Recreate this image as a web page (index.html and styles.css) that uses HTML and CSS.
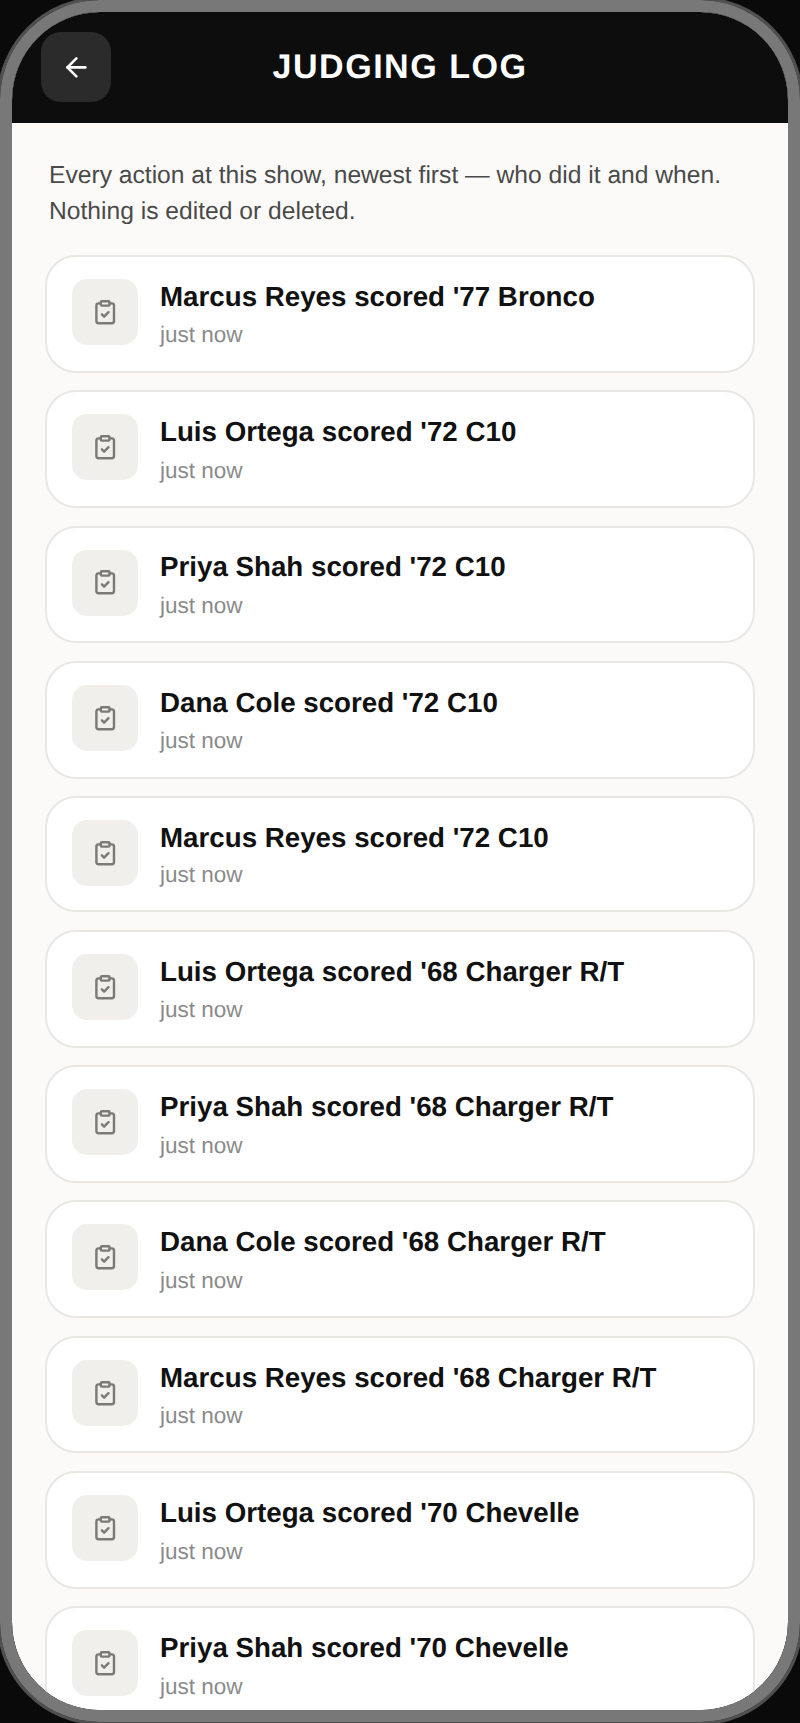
FILE: index.html
```html
<!DOCTYPE html>
<html lang="en">
<head>
<meta charset="utf-8">
<title>Judging Log</title>
<link rel="stylesheet" href="styles.css">
</head>
<body>
<svg class="defs" width="0" height="0" aria-hidden="true">
  <symbol id="clip" viewBox="0 0 24 24"><rect x="8" y="2" width="8" height="4" rx="1"/><path d="M16 4h2a2 2 0 0 1 2 2v14a2 2 0 0 1-2 2H6a2 2 0 0 1-2-2V6a2 2 0 0 1 2-2h2"/><path d="m9 14 2 2 4-4"/></symbol>
</svg>
<div class="phone">
  <div class="screen">
    <header class="topbar">
      <button class="back" aria-label="Back">
        <svg class="back-icon" viewBox="0 0 24 24"><path d="m12 19-7-7 7-7"/><path d="M19 12H5"/></svg>
      </button>
      <h1 class="title">JUDGING LOG</h1>
    </header>
    <main class="content">
      <p class="intro">Every action at this show, newest first — who did it and when. Nothing is edited or deleted.</p>
      <ul class="log">
        <li class="card"><span class="badge"><svg class="badge-icon"><use href="#clip"/></svg></span><div class="text"><div class="who">Marcus Reyes scored '77 Bronco</div><div class="when">just now</div></div></li>
        <li class="card"><span class="badge"><svg class="badge-icon"><use href="#clip"/></svg></span><div class="text"><div class="who">Luis Ortega scored '72 C10</div><div class="when">just now</div></div></li>
        <li class="card"><span class="badge"><svg class="badge-icon"><use href="#clip"/></svg></span><div class="text"><div class="who">Priya Shah scored '72 C10</div><div class="when">just now</div></div></li>
        <li class="card"><span class="badge"><svg class="badge-icon"><use href="#clip"/></svg></span><div class="text"><div class="who">Dana Cole scored '72 C10</div><div class="when">just now</div></div></li>
        <li class="card card-tight"><span class="badge"><svg class="badge-icon"><use href="#clip"/></svg></span><div class="text"><div class="who">Marcus Reyes scored '72 C10</div><div class="when">just now</div></div></li>
        <li class="card"><span class="badge"><svg class="badge-icon"><use href="#clip"/></svg></span><div class="text"><div class="who">Luis Ortega scored '68 Charger R/T</div><div class="when">just now</div></div></li>
        <li class="card"><span class="badge"><svg class="badge-icon"><use href="#clip"/></svg></span><div class="text"><div class="who">Priya Shah scored '68 Charger R/T</div><div class="when">just now</div></div></li>
        <li class="card"><span class="badge"><svg class="badge-icon"><use href="#clip"/></svg></span><div class="text"><div class="who">Dana Cole scored '68 Charger R/T</div><div class="when">just now</div></div></li>
        <li class="card"><span class="badge"><svg class="badge-icon"><use href="#clip"/></svg></span><div class="text"><div class="who">Marcus Reyes scored '68 Charger R/T</div><div class="when">just now</div></div></li>
        <li class="card"><span class="badge"><svg class="badge-icon"><use href="#clip"/></svg></span><div class="text"><div class="who">Luis Ortega scored '70 Chevelle</div><div class="when">just now</div></div></li>
        <li class="card"><span class="badge"><svg class="badge-icon"><use href="#clip"/></svg></span><div class="text"><div class="who">Priya Shah scored '70 Chevelle</div><div class="when">just now</div></div></li>
      </ul>
    </main>
  </div>
</div>
</body>
</html>
```
FILE: styles.css
```css
* { box-sizing: border-box; }
html, body { margin: 0; height: 100%; background: #0a0a0a; overflow: hidden; }
body { font-family: "Liberation Sans", Arial, sans-serif; text-rendering: geometricPrecision; }
.defs { position: absolute; }
.phone {
  height: 1722px;
  border: 12px solid #787878;
  border-radius: 100px;
  box-shadow: 0 0 0 3px #505050;
  overflow: hidden;
}
.screen {
  height: 100%;
  background: #fbfaf8;
  border-radius: 88px;
  overflow: hidden;
}
.topbar {
  height: 111px;
  background: #0d0d0d;
  padding: 20px 29px 0;
  display: grid;
  grid-template-columns: 1fr auto 1fr;
  align-items: start;
}
.back {
  width: 70px;
  height: 70px;
  padding: 0;
  border: 0;
  border-radius: 20px;
  background: #2b2b2b;
  display: flex;
  align-items: center;
  justify-content: center;
}
.back-icon {
  width: 30.8px;
  height: 30.8px;
  fill: none;
  stroke: #fff;
  stroke-width: 2;
  stroke-linecap: round;
  stroke-linejoin: round;
}
.title {
  margin: 14.5px 0 0;
  color: #fff;
  font-size: 34.1px;
  line-height: 40px;
  font-weight: 700;
  letter-spacing: 1.5px;
}
.content { padding: 34.7px 33px 0; }
.intro {
  margin: 0 0 24.7px;
  padding: 0 4px;
  color: #4a4a4a;
  font-size: 24.64px;
  line-height: 36.3px;
}
.log {
  list-style: none;
  margin: 0;
  padding: 0;
  display: flex;
  flex-direction: column;
  gap: 17.6px;
}
.card {
  flex: none;
  height: 117.7px;
  background: #fff;
  border: 2px solid #e8e7e4;
  border-radius: 31px;
  padding: 22px 25px;
  display: flex;
  gap: 22px;
  align-items: flex-start;
}
.card-tight { height: 116.2px; }
.badge {
  flex: none;
  width: 66px;
  height: 66px;
  border-radius: 15px;
  background: #f0efec;
  display: flex;
  align-items: center;
  justify-content: center;
}
.badge-icon {
  width: 26.4px;
  height: 26.4px;
  fill: none;
  stroke: #7a7a76;
  stroke-width: 2.2;
  stroke-linecap: round;
  stroke-linejoin: round;
}
.text { margin-top: -2.1px; }
.who {
  color: #111;
  font-size: 27.72px;
  line-height: 40px;
  font-weight: 700;
}
.when {
  margin-top: 0.6px;
  color: #8a8a8a;
  font-size: 22.5px;
  line-height: 36px;
}
.card-tight .when { margin-top: -0.9px; }
```
